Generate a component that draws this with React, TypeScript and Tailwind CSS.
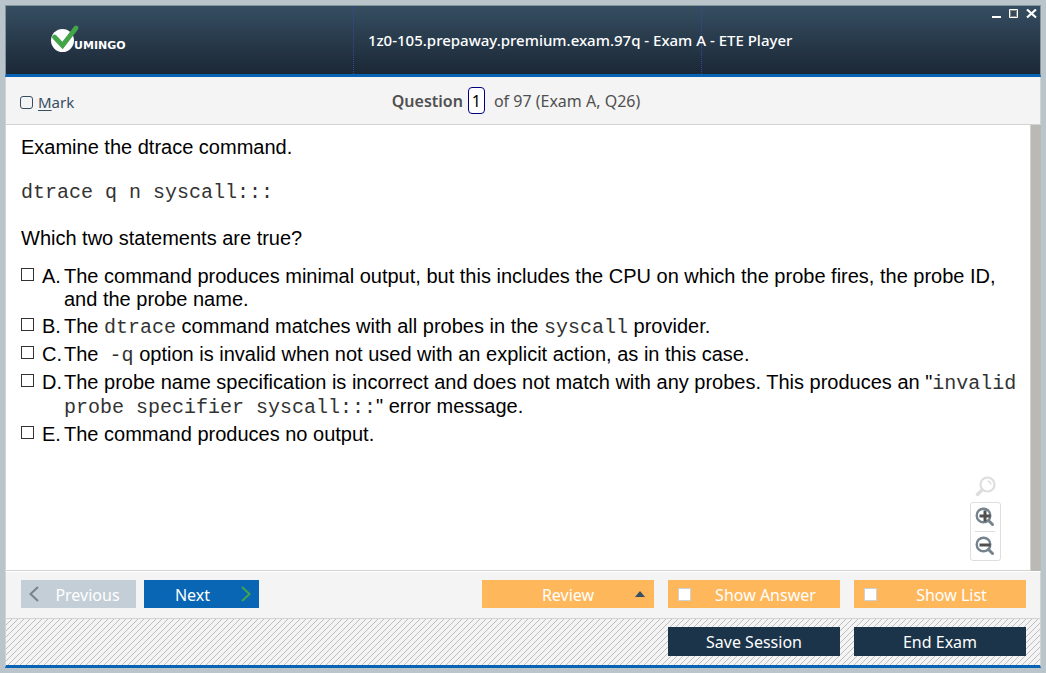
import type { ReactNode } from "react";

const UI = "font-['Noto_Sans',sans-serif]";

function Logo() {
  return (
    <svg viewBox="0 0 82 30" className="h-[30px] w-[82px]" role="img" aria-label="Vumingo">
      <circle cx="12.500" cy="17.500" r="11.500" fill="#fff" />
      <path d="M4.500 14 L12.500 22.500 L26 5" fill="none" stroke="#43a548" strokeWidth="4.800" strokeLinecap="round" strokeLinejoin="miter" />
      <text x="24" y="26" fill="#fff" fontSize="11" fontWeight="700" fontFamily="'DejaVu Sans', sans-serif">
        UMINGO
      </text>
    </svg>
  );
}

function Code({ children }: { children: ReactNode }) {
  return <code className="font-['Liberation_Mono','Courier_New',monospace] text-[20px] font-normal text-[#333]">{children}</code>;
}

function Option({ letter, children }: { letter: string; children: ReactNode }) {
  const id = `option-${letter}`;
  return (
    <li className="flex items-start">
      <input id={id} type="checkbox" className="mt-[3px] size-[13px] shrink-0 appearance-none border border-[#333] bg-white checked:bg-[#333]" />
      <label htmlFor={id} className="flex min-w-0">
        <span className="w-[30px] shrink-0 pl-2">{letter}.</span>
        <span>{children}</span>
      </label>
    </li>
  );
}

function ZoomIcon({ plus }: { plus?: boolean }) {
  return (
    <svg viewBox="0 0 20 20" className="size-5" fill="none" aria-hidden="true">
      <circle cx="8.500" cy="8.500" r="6.800" stroke="#75838e" strokeWidth="2.400" />
      <path d="M13.500 13.500 L17.500 17.500" stroke="#75838e" strokeWidth="3" strokeLinecap="round" />
      <path d="M4.500 9 H15.500" stroke="#505050" strokeWidth="3" />
      {plus && <path d="M10 3.500 V14.500" stroke="#505050" strokeWidth="3" />}
    </svg>
  );
}

function Toggle({ label }: { label: string }) {
  return (
    <label className="flex h-7 w-[172px] items-center bg-[#ffb75c] pl-[10px] text-white">
      <input type="checkbox" className="size-[13px] appearance-none border border-[#d0d0d0] bg-white checked:bg-[#1b344a]" />
      <span className="flex-1 pt-px text-center">{label}</span>
    </label>
  );
}

export default function App() {
  return (
    <div className={`flex min-h-screen flex-col bg-[#b9c5cb] p-[5px] text-[16px] ${UI}`}>
      <div className="flex flex-1 flex-col">
        <header className="grid h-[72px] grid-cols-[minmax(0,36fr)_minmax(0,36fr)_minmax(0,35fr)] border-x border-t border-b-[3px] border-x-[#84959a] border-t-[#84959a] border-b-[#0863b4] bg-linear-to-b from-[#364e62] to-[#1b2836] text-white">
          <div className="border-r border-dotted border-[#34479b] pt-[17px] pl-11">
            <Logo />
          </div>
          <h1 className="flex items-center border-r border-dotted border-[#34479b] pl-[14px] text-[15px] font-medium whitespace-nowrap">
            1z0-105.prepaway.premium.exam.97q - Exam A - ETE Player
          </h1>
          <div className="flex items-start justify-end gap-2 pt-[3px] pr-[3px]">
            <button aria-label="Minimize">
              <svg viewBox="0 0 9 10" className="h-[10px] w-[9px]"><path d="M0 8 H9" stroke="#fff" strokeWidth="2" /></svg>
            </button>
            <button aria-label="Maximize">
              <svg viewBox="0 0 9 10" className="h-[10px] w-[9px]" fill="none"><path d="M1.500 1.500 H7.500 V7.500 H1.500 Z" stroke="#8a8580" /><path d="M.5 .5 H8.500 V8.500 H.5 Z" stroke="#fff" /></svg>
            </button>
            <button aria-label="Close">
              <svg viewBox="0 0 11 10" className="h-[10px] w-[11px]"><path d="M1 .5 L10 8.500 M10 .5 L1 8.500" stroke="#fff" strokeWidth="2.200" /></svg>
            </button>
          </div>
        </header>

        <section className="grid h-12 grid-cols-[1fr_auto_1fr] items-center border border-t-0 border-[#d2d2d2] bg-[#f4f4f4] pr-7 pl-[14px] text-[#505050]">
          <label className="flex items-center gap-[5px] pt-1 text-[15px] text-[#364e62]">
            <input type="checkbox" className="size-[13px] appearance-none rounded-[3px] border border-[#364e62] checked:bg-[#364e62]" />
            <span><u className="underline-offset-2">M</u>ark</span>
          </label>
          <div className="flex items-center">
            <label htmlFor="question" className="font-semibold">Question</label>
            <input id="question" defaultValue="1" className="mx-[5px] h-[27px] w-[17px] rounded-[4px] border border-[#000080] bg-white text-center text-black" />
            <span className="pl-1">of 97 (Exam A, Q26)</span>
          </div>
        </section>

        <main className="flex flex-1 border-l border-[#d2d2d2] bg-white font-['Liberation_Sans',Arial,sans-serif] text-[20px] leading-[23px] text-black">
          <div className="flex min-w-0 flex-1 flex-col border-b border-[#d2d2d2] pt-[11px] pr-2 pl-[15px]">
            <p>Examine the dtrace command.</p>
            <p className="mt-[21px]"><Code>dtrace q n syscall:::</Code></p>
            <p className="mt-[23px]">Which two statements are true?</p>
            <ul className="mt-[15px] flex flex-col gap-1">
              <Option letter="A">The command produces minimal output, but this includes the CPU on which the probe fires, the probe ID, and the probe name.</Option>
              <Option letter="B">The <Code>dtrace</Code> command matches with all probes in the <Code>syscall</Code> provider.</Option>
              <Option letter="C">The&nbsp; <Code>-q</Code> option is invalid when not used with an explicit action, as in this case.</Option>
              <Option letter="D">The probe name specification is incorrect and does not match with any probes. This produces an "<Code>invalid probe specifier syscall:::</Code>" error message.</Option>
              <Option letter="E">The command produces no output.</Option>
            </ul>
            <div className="mt-auto mr-[21px] mb-[9px] flex w-[31px] flex-col items-center gap-1 self-end">
              <svg viewBox="0 0 22 22" className="size-[22px]" fill="none" stroke="#dedede" aria-hidden="true">
                <circle cx="12.500" cy="8.500" r="7" strokeWidth="2.200" />
                <path d="M7 14 L2.500 18.500" strokeWidth="3.500" strokeLinecap="round" />
                <path d="M12.500 5 A4 4 0 0 1 16 8.500" strokeWidth="1.500" />
              </svg>
              <div className="flex h-[59px] w-[31px] flex-col items-center rounded-[3px] border border-[#dedede] pr-[6px] pl-1">
                <button aria-label="Zoom in" className="flex flex-1 items-center border-b border-[#dedede]"><ZoomIcon plus /></button>
                <button aria-label="Zoom out" className="flex flex-1 items-center"><ZoomIcon /></button>
              </div>
            </div>
          </div>
          <div className="w-[11px] border-l border-[#d2d2d2] bg-[#bbb9b5]" />
        </main>

        <footer className="text-white">
          <div className="flex h-12 items-start border border-[#d2d2d2] border-t-white bg-[#f4f4f4] px-[14px] pt-2">
            <div className="flex flex-1 gap-2 pl-px">
              <button disabled className="flex h-7 w-[115px] items-center bg-[#c4ced7] px-2">
                <svg viewBox="0 0 10 16" className="h-4 w-[10px]" fill="none" stroke="#75838e" strokeWidth="2"><path d="M9 1 L1.500 8 L9 15" /></svg>
                <span className="flex-1 pt-px pl-2">Previous</span>
              </button>
              <button className="flex h-7 w-[115px] items-center bg-[#0866b5] px-2">
                <span className="flex-1 pt-px pr-2">Next</span>
                <svg viewBox="0 0 10 16" className="h-4 w-[10px]" fill="none" stroke="#43a548" strokeWidth="2"><path d="M1 1 L8.500 8 L1 15" /></svg>
              </button>
            </div>
            <div className="flex gap-[14px]">
              <button className="flex h-7 w-[172px] items-center bg-[#ffb75c] pr-[9px]">
                <span className="flex-1 pt-px pl-[19px]">Review</span>
                <svg viewBox="0 0 10 6" className="h-[6px] w-[10px]" fill="#364e62"><path d="M0 6 L5 0 L10 6 Z" /></svg>
              </button>
              <Toggle label="Show Answer" />
              <Toggle label="Show List" />
            </div>
          </div>
          <div className="flex h-[49px] items-start justify-end gap-[14px] border-x border-b-[3px] border-x-[#d2d2d2] border-b-[#0863b4] bg-[linear-gradient(135deg,#f4f4f4_45%,#bdbdbd_45%_55%,#f4f4f4_55%)] bg-size-[6px_6px] px-[14px] pt-2">
            <button className="h-[29px] w-[172px] bg-[#1b344a]">Save Session</button>
            <button className="h-[29px] w-[172px] bg-[#1b344a]">End Exam</button>
          </div>
        </footer>
      </div>
    </div>
  );
}
